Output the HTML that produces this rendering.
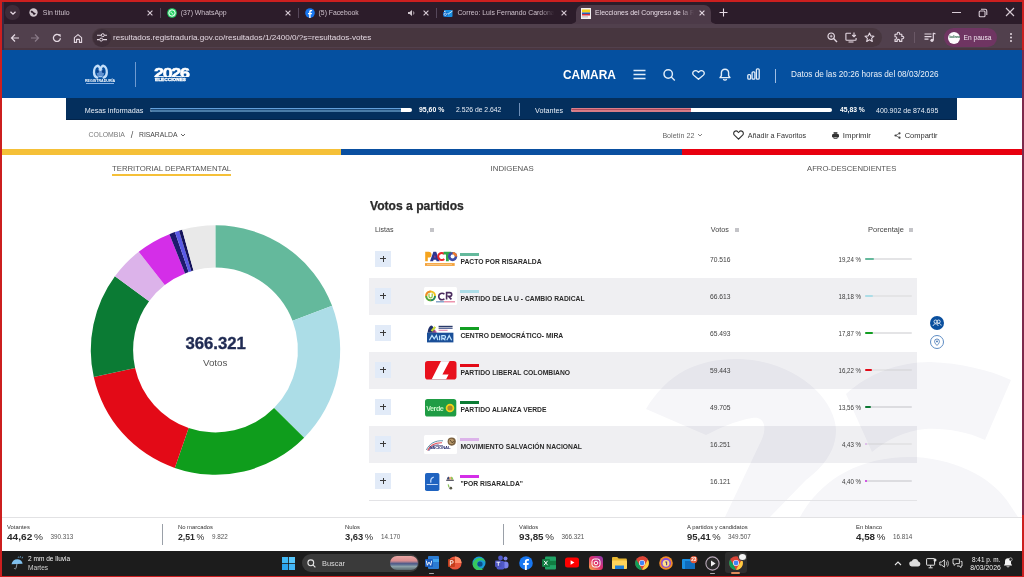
<!DOCTYPE html>
<html><head><meta charset="utf-8"><style>
*{margin:0;padding:0;box-sizing:border-box}
html,body{width:1024px;height:577px;overflow:hidden;background:#cc1f1f;font-family:"Liberation Sans",sans-serif}
.a{position:absolute;white-space:nowrap}
#root{position:absolute;left:0;top:0;width:1024px;height:577px;overflow:hidden}
.sort{width:4px;height:4px;background:#c4c4c8}
.plus{width:16px;height:16px;background:#e2ebf8}
.plus:before{content:"";position:absolute;left:5.2px;top:7.6px;width:5.6px;height:.9px;background:#3a3a3a}
.plus:after{content:"";position:absolute;left:7.55px;top:5.2px;width:.9px;height:5.6px;background:#3a3a3a}
</style></head>
<body><div id="root">
<!-- ===== CHROME TAB STRIP ===== -->
<div class="a" style="left:2px;top:2px;width:1020px;height:22px;background:#2c1c2a"></div>
<div class="a" style="left:4.8px;top:5px;width:15.5px;height:15px;border-radius:7px;background:#3d2c3a"></div>
<svg class="a" style="left:9px;top:9px" width="8" height="8" viewBox="0 0 8 8"><path d="M1.5 2.8L4 5.2L6.5 2.8" stroke="#e8dbe6" stroke-width="1.3" fill="none"/></svg>
<!-- tab1 -->
<svg class="a" style="left:29px;top:8px" width="9" height="9" viewBox="0 0 10 10"><circle cx="5" cy="5" r="4.6" fill="#cfc5cd"/><path d="M2 3.2c1.5-.6 2.4.3 3 1.2.7 1 1.8.6 2.6 1.4-.4 1.2-1.6 2-2.6 1.6-.9-.4-.4-1.6-1.6-2-.8-.3-1.6-.3-1.4-2.2z" fill="#2c1c2a"/></svg>
<div class="a " style="left:42.80px;top:9.82px;font-size:6.9px;line-height:6.9px;color:#cdc0cb;">Sin título</div>
<svg class="a" style="left:147.0px;top:10px" width="6" height="6" viewBox="0 0 6 6"><path d="M.6 .6L5.4 5.4M5.4 .6L.6 5.4" stroke="#d9ccd7" stroke-width="1.1"/></svg>
<div class="a" style="left:160px;top:8px;width:1px;height:10px;background:#56475a"></div>
<!-- tab2 -->
<svg class="a" style="left:167px;top:8px" width="10" height="10" viewBox="0 0 10 10"><circle cx="5" cy="5" r="4.8" fill="#25d366"/><circle cx="5" cy="5" r="3.2" fill="none" stroke="#fff" stroke-width="1"/><path d="M3.8 3.6c.3 1.2 1.2 2.2 2.5 2.6" stroke="#fff" stroke-width="1" fill="none"/></svg>
<div class="a " style="left:180.70px;top:9.82px;font-size:6.9px;line-height:6.9px;color:#cdc0cb;">(37) WhatsApp</div>
<svg class="a" style="left:285.0px;top:10px" width="6" height="6" viewBox="0 0 6 6"><path d="M.6 .6L5.4 5.4M5.4 .6L.6 5.4" stroke="#d9ccd7" stroke-width="1.1"/></svg>
<div class="a" style="left:298px;top:8px;width:1px;height:10px;background:#56475a"></div>
<!-- tab3 -->
<svg class="a" style="left:305px;top:8px" width="10" height="10" viewBox="0 0 10 10"><circle cx="5" cy="5" r="4.8" fill="#1877f2"/><path d="M5.6 10V6.3h1.2l.2-1.4H5.6V4c0-.4.2-.7.8-.7h.7V2.1c-.2 0-.6-.1-1.1-.1-1.1 0-1.8.6-1.8 1.8v1.1H3v1.4h1.2V10z" fill="#fff"/></svg>
<div class="a " style="left:318.60px;top:9.82px;font-size:6.8px;line-height:6.8px;color:#cdc0cb;">(5) Facebook</div>
<svg class="a" style="left:407px;top:9px" width="9" height="8" viewBox="0 0 9 8"><path d="M1 3h1.6L5 1v6L2.6 5H1z" fill="#cfc5cd"/><path d="M6.3 2.5c.7.8.7 2.2 0 3" stroke="#cfc5cd" stroke-width=".9" fill="none"/></svg>
<svg class="a" style="left:423.0px;top:10px" width="6" height="6" viewBox="0 0 6 6"><path d="M.6 .6L5.4 5.4M5.4 .6L.6 5.4" stroke="#d9ccd7" stroke-width="1.1"/></svg>
<div class="a" style="left:436px;top:8px;width:1px;height:10px;background:#56475a"></div>
<!-- tab4 -->
<svg class="a" style="left:443px;top:8px" width="10" height="10" viewBox="0 0 10 10"><rect x="1" y="2" width="8.5" height="7" rx="1" fill="#1a8fe3"/><path d="M1 3l4.2 3 4.3-3" stroke="#cfe8fb" stroke-width="1" fill="none"/><rect x="0" y="4" width="4.5" height="4.5" rx=".6" fill="#0a64c4"/><circle cx="2.25" cy="6.25" r="1.2" fill="none" stroke="#fff" stroke-width=".7"/></svg>
<div class="a" style="left:450px;top:4px;width:104px;height:16px;overflow:hidden"><div class="a " style="left:7.40px;top:5.82px;font-size:6.9px;line-height:6.9px;color:#cdc0cb;">Correo: Luis Fernando Cardona</div></div>
<div class="a" style="left:540px;top:4px;width:14px;height:18px;background:linear-gradient(90deg,rgba(44,28,42,0),#2c1c2a)"></div>
<svg class="a" style="left:561.0px;top:10px" width="6" height="6" viewBox="0 0 6 6"><path d="M.6 .6L5.4 5.4M5.4 .6L.6 5.4" stroke="#d9ccd7" stroke-width="1.1"/></svg>
<!-- active tab -->
<div class="a" style="left:576px;top:5px;width:135px;height:20px;background:#4c3a48;border-radius:7px 7px 0 0"></div>
<svg class="a" style="left:570px;top:17px" width="7" height="7"><path d="M0 7C4 7 7 5 7 0V7z" fill="#4c3a48"/></svg>
<svg class="a" style="left:710px;top:17px" width="7" height="7"><path d="M7 7C3 7 0 5 0 0V7z" fill="#4c3a48"/></svg>
<svg class="a" style="left:581px;top:8px" width="10" height="11" viewBox="0 0 10 11"><rect x="0" y="0" width="10" height="11" fill="#f4f1f3"/><rect x="1" y="1.5" width="8" height="3" fill="#f2d21a"/><rect x="1" y="4.5" width="8" height="1.5" fill="#2b5fb8"/><rect x="1" y="6" width="8" height="1.5" fill="#d9303a"/><rect x="1" y="8.5" width="6" height=".8" fill="#aaa"/></svg>
<div class="a" style="left:590px;top:4px;width:104px;height:16px;overflow:hidden"><div class="a " style="left:5.00px;top:5.82px;font-size:6.9px;line-height:6.9px;color:#e6dae4;">Elecciones del Congreso de la República</div></div>
<div class="a" style="left:680px;top:6px;width:14px;height:16px;background:linear-gradient(90deg,rgba(76,58,72,0),#4c3a48)"></div>
<svg class="a" style="left:699.0px;top:10px" width="6" height="6" viewBox="0 0 6 6"><path d="M.6 .6L5.4 5.4M5.4 .6L.6 5.4" stroke="#e6dae4" stroke-width="1.1"/></svg>
<svg class="a" style="left:719px;top:8px" width="9" height="9" viewBox="0 0 9 9"><path d="M4.5 .5v8M.5 4.5h8" stroke="#e6dae4" stroke-width="1.1"/></svg>
<!-- window controls -->
<div class="a" style="left:952px;top:12px;width:9px;height:1px;background:#d8ccd6"></div>
<svg class="a" style="left:978px;top:8px" width="10" height="10" viewBox="0 0 10 10"><rect x="1.2" y="3" width="5.8" height="5.8" rx="1" fill="none" stroke="#d8ccd6" stroke-width="1.1"/><path d="M3 1.3h4.2c.9 0 1.6.7 1.6 1.6V7" stroke="#d8ccd6" stroke-width="1.1" fill="none"/></svg>
<svg class="a" style="left:1005px;top:7px" width="10" height="10" viewBox="0 0 10 10"><path d="M1 1L9 9M9 1L1 9" stroke="#d8ccd6" stroke-width="1.1"/></svg>

<!-- ===== ADDRESS ROW ===== -->
<div class="a" style="left:2px;top:24px;width:1020px;height:26px;background:#51404d"></div>
<div class="a" style="left:2px;top:48px;width:1020px;height:2px;background:#4a3640"></div>
<svg class="a" style="left:9.5px;top:33px" width="10" height="10" viewBox="0 0 10 10"><path d="M9 5H1.6M5 1.5L1.5 5L5 8.5" stroke="#e4d8e2" stroke-width="1.2" fill="none"/></svg>
<svg class="a" style="left:30px;top:33px" width="10" height="10" viewBox="0 0 10 10"><path d="M1 5h7.4M5 1.5L8.5 5L5 8.5" stroke="#8a7a88" stroke-width="1.2" fill="none"/></svg>
<svg class="a" style="left:51.5px;top:33px" width="10" height="10" viewBox="0 0 10 10"><path d="M8.4 5.2A3.5 3.5 0 1 1 7.3 2.4" stroke="#e4d8e2" stroke-width="1.3" fill="none"/><path d="M5.6 1.2h3v3z" fill="#e4d8e2"/></svg>
<svg class="a" style="left:72.5px;top:32.5px" width="10" height="11" viewBox="0 0 10 11"><path d="M1.4 9.4V4.6L5 1.6l3.6 3V9.4H6.4V6.4H3.6v3z" stroke="#e4d8e2" stroke-width="1.1" fill="none" stroke-linejoin="round"/></svg>
<div class="a" style="left:92px;top:28px;width:790px;height:19px;border-radius:10px;background:#47363f"></div><div class="a" style="left:93px;top:28.5px;width:18px;height:18px;border-radius:9px;background:#3e2e39"></div>
<svg class="a" style="left:97px;top:33px" width="10" height="9" viewBox="0 0 10 9"><path d="M0 2.2h4M7.5 2.2H10M0 6.6h2.5M6 6.6h4" stroke="#e4d8e2" stroke-width="1.1"/><circle cx="5.8" cy="2.2" r="1.5" fill="none" stroke="#e4d8e2" stroke-width="1"/><circle cx="4.2" cy="6.6" r="1.5" fill="none" stroke="#e4d8e2" stroke-width="1"/></svg>
<div class="a " style="left:113.00px;top:34.23px;font-size:8.1px;line-height:8.1px;color:#e3d7e1;">resultados.registraduria.gov.co/resultados/1/2400/0/?s=resultados-votes</div>
<svg class="a" style="left:827px;top:32px" width="11" height="11" viewBox="0 0 11 11"><circle cx="4.2" cy="4.2" r="3.2" stroke="#e4d8e2" stroke-width="1.2" fill="none"/><path d="M6.6 6.6L10 10" stroke="#e4d8e2" stroke-width="1.4"/><path d="M2.8 4.2h2.8M4.2 2.8v2.8" stroke="#e4d8e2" stroke-width=".8"/></svg>
<svg class="a" style="left:845px;top:32px" width="12" height="11" viewBox="0 0 12 11"><path d="M6 1.2H1.6c-.4 0-.7.3-.7.7v5.6c0 .4.3.7.7.7h8.8c.4 0 .7-.3.7-.7V6" stroke="#e4d8e2" stroke-width="1.1" fill="none"/><path d="M3.5 10h5" stroke="#e4d8e2" stroke-width="1.1"/><path d="M9 .5v4.2M7.2 3l1.8 1.8L10.8 3" stroke="#e4d8e2" stroke-width="1.1" fill="none"/></svg>
<svg class="a" style="left:864px;top:32px" width="11" height="11" viewBox="0 0 11 11"><path d="M5.5 1l1.3 2.9 3.2.3-2.4 2.1.7 3.1-2.8-1.6-2.8 1.6.7-3.1L1 4.2l3.2-.3z" stroke="#e4d8e2" stroke-width="1.1" fill="none" stroke-linejoin="round"/></svg>
<svg class="a" style="left:893px;top:31px" width="12" height="12" viewBox="0 0 12 12"><path d="M2 3.2h2.2V2.4a1.2 1.2 0 0 1 2.4 0v.8h2.2v2.2h.8a1.2 1.2 0 0 1 0 2.4h-.8v2.6H6.6V9.6a1.2 1.2 0 0 0-2.4 0v.8H2V8.2h.6a1.2 1.2 0 0 0 0-2.4H2z" stroke="#e4d8e2" stroke-width="1.1" fill="none" stroke-linejoin="round"/></svg>
<div class="a" style="left:914px;top:32px;width:1px;height:11px;background:#6a5866"></div>
<svg class="a" style="left:924px;top:32px" width="12" height="11" viewBox="0 0 12 11"><path d="M0.5 2h7M0.5 4.6h7M0.5 7.2h4" stroke="#e4d8e2" stroke-width="1.2"/><path d="M9.3 1v7" stroke="#e4d8e2" stroke-width="1.2"/><circle cx="8" cy="8.3" r="1.6" fill="#e4d8e2"/><path d="M9.3 1l2.2 1" stroke="#e4d8e2" stroke-width="1.2"/></svg>
<div class="a" style="left:944px;top:28px;width:53px;height:19px;border-radius:10px;background:#6f3562"></div>
<div class="a" style="left:948px;top:31.5px;width:12px;height:12px;border-radius:50%;background:#fdfdfd"></div>
<div class="a" style="left:949.5px;top:36px;font-size:3px;line-height:3px;color:#1a5a3a;font-weight:bold">ladinna</div>
<div class="a " style="left:963.60px;top:34.74px;font-size:6.6px;line-height:6.6px;color:#f0e4ee;">En pausa</div>
<div class="a" style="left:1009.5px;top:33px;width:2px;height:2px;border-radius:1px;background:#e4d8e2;box-shadow:0 3.5px 0 #e4d8e2,0 7px 0 #e4d8e2"></div>

<!-- ===== SITE HEADER ===== -->
<div class="a" style="left:2px;top:50px;width:1020px;height:48px;background:#0550a0"></div>
<!-- registraduria crest -->
<svg class="a" style="left:84px;top:62px" width="33" height="18" viewBox="84 62 33 18">
<ellipse cx="100.4" cy="73" rx="3.6" ry="4.2" fill="#5f8fce"/>
<path d="M100.4 69.6C99.6 67 98.4 65.6 97.2 65.8C95.2 66.4 93.9 69.6 94 72.6C94.1 75.4 95.4 77 97.2 77.6" stroke="#c4def9" stroke-width="2.3" fill="none" stroke-linecap="round"/>
<path d="M100.4 69.6C101.2 67 102.4 65.6 103.6 65.8C105.6 66.4 106.9 69.6 106.8 72.6C106.7 75.4 105.4 77 103.6 77.6" stroke="#c4def9" stroke-width="2.3" fill="none" stroke-linecap="round"/>
<ellipse cx="97.6" cy="71.4" rx="1.3" ry="1.6" fill="#0a3f88"/>
<ellipse cx="103.2" cy="71.4" rx="1.3" ry="1.6" fill="#0a3f88"/>
<path d="M98.6 76.6h3.6" stroke="#9cc4f0" stroke-width="1.2"/>
</svg>
<div class="a " style="left:84.70px;top:79.54px;font-size:3.7px;line-height:3.7px;color:#fff;font-weight:bold;transform:scaleX(0.98);transform-origin:left">REGISTRADURÍA</div>
<div class="a" style="left:86px;top:83.3px;width:28px;height:.8px;background:#8fb4e4"></div>
<div class="a" style="left:135px;top:62px;width:1px;height:25px;background:#6f9ad0"></div>
<!-- 2026 ELECCIONES -->
<div class="a " style="left:153.80px;top:66.83px;font-size:13.8px;line-height:13.8px;color:#fff;font-weight:bold;letter-spacing:-1px;transform:scaleX(1.3);transform-origin:left;-webkit-text-stroke:0.5px #fff">2026</div>
<div class="a" style="left:150px;top:77.3px;width:44px;height:1px;background:#0550a0"></div>
<div class="a " style="left:155.40px;top:78.31px;font-size:4.2px;line-height:4.2px;color:#fff;font-weight:bold;letter-spacing:0.05px;transform:scaleX(1.12);transform-origin:left;-webkit-text-stroke:0.3px #fff">ELECCIONES</div>
<!-- CAMARA + icons -->
<div class="a " style="left:563.00px;top:70.07px;font-size:11.9px;line-height:11.9px;color:#fff;font-weight:bold;">CAMARA</div>
<svg class="a" style="left:633px;top:69px" width="13" height="11" viewBox="0 0 13 11"><path d="M0.5 1.5h12M0.5 5.5h12M0.5 9.5h12" stroke="#e2edf9" stroke-width="1.45"/></svg>
<svg class="a" style="left:663px;top:69px" width="13" height="12" viewBox="0 0 13 12"><circle cx="5.2" cy="5" r="4.2" stroke="#e2edf9" stroke-width="1.45" fill="none"/><path d="M8.3 8.1L11.8 11.4" stroke="#e2edf9" stroke-width="1.4"/></svg>
<svg class="a" style="left:691.5px;top:70px" width="13" height="10" viewBox="0 0 13 11" preserveAspectRatio="none"><path d="M6.5 10.2L1.6 5.6C.4 4.4.5 2.4 1.8 1.4 3 .5 4.9.7 6 1.9l.5.6.5-.6C8.1.7 10 .5 11.2 1.4c1.3 1 1.4 3 .2 4.2z" stroke="#e2edf9" stroke-width="1.4" fill="none" stroke-linejoin="round"/></svg>
<svg class="a" style="left:719px;top:68px" width="12" height="13" viewBox="0 0 12 13"><path d="M6 1.2c-2.2 0-3.6 1.6-3.6 3.6v3L1 9.6h10L9.6 7.8v-3C9.6 2.8 8.2 1.2 6 1.2z" stroke="#e2edf9" stroke-width="1.4" fill="none" stroke-linejoin="round"/><path d="M4.4 11a1.7 1.7 0 0 0 3.2 0" stroke="#e2edf9" stroke-width="1.3" fill="none"/></svg>
<svg class="a" style="left:747px;top:68px" width="13" height="12" viewBox="0 0 13 12"><rect x=".8" y="6.6" width="2.8" height="4.6" rx="1" stroke="#e2edf9" stroke-width="1.3" fill="none"/><rect x="5.1" y="3.8" width="2.8" height="7.4" rx="1" stroke="#e2edf9" stroke-width="1.3" fill="none"/><rect x="9.4" y=".8" width="2.8" height="10.4" rx="1" stroke="#e2edf9" stroke-width="1.3" fill="none"/></svg>
<div class="a" style="left:774.5px;top:68.5px;width:1px;height:14px;background:#9fbde3"></div>
<div class="a " style="left:791.00px;top:71.03px;font-size:8.2px;line-height:8.2px;color:#eaf0f8;">Datos de las 20:26 horas del 08/03/2026</div>

<!-- ===== NAVY PROGRESS BAR ===== -->
<div class="a" style="left:2px;top:98px;width:1020px;height:453px;background:#fff"></div>
<div class="a" style="left:66px;top:98px;width:891px;height:22px;background:#042f5d;border-bottom:1px solid #03244a"></div>
<div class="a " style="left:84.70px;top:106.90px;font-size:7.2px;line-height:7.2px;color:#e8eef6;">Mesas informadas</div>
<div class="a" style="left:150px;top:107.8px;width:262px;height:4px;border-radius:2px;background:#fff"></div>
<div class="a" style="left:150px;top:107.8px;width:251px;height:4px;border-radius:2px 0 0 2px;background:linear-gradient(180deg,#62a0dc 0,#62a0dc 1.1px,#1d4a78 1.1px,#1d4a78 1.9px,#4a7ca8 1.9px)"></div>
<div class="a " style="left:419.00px;top:106.92px;font-size:6.9px;line-height:6.9px;color:#fff;font-weight:bold;">95,60 %</div>
<div class="a " style="left:456.00px;top:106.92px;font-size:6.8px;line-height:6.8px;color:#e8eef6;">2.526 de 2.642</div>
<div class="a" style="left:519px;top:103px;width:1px;height:13px;background:#6f8fb8"></div>
<div class="a " style="left:535.00px;top:106.90px;font-size:7.2px;line-height:7.2px;color:#e8eef6;">Votantes</div>
<div class="a" style="left:571px;top:107.8px;width:261px;height:4px;border-radius:2px;background:#fff"></div>
<div class="a" style="left:571px;top:107.8px;width:120px;height:4px;border-radius:2px 0 0 2px;background:linear-gradient(180deg,#dc7e88 0,#dc7e88 1.1px,#b04a5c 1.1px,#b04a5c 1.9px,#d97c86 1.9px)"></div>
<div class="a " style="left:840.00px;top:106.93px;font-size:6.75px;line-height:6.75px;color:#fff;font-weight:bold;">45,83 %</div>
<div class="a " style="left:876.00px;top:106.91px;font-size:7.0px;line-height:7.0px;color:#e8eef6;">400.902 de 874.695</div>

<!-- ===== BREADCRUMB ===== -->
<div class="a " style="left:88.60px;top:132.32px;font-size:6.9px;line-height:6.9px;color:#7a7a7a;">COLOMBIA</div>
<div class="a " style="left:130.80px;top:130.97px;font-size:9px;line-height:9px;color:#555;">/</div>
<div class="a " style="left:139.00px;top:132.32px;font-size:6.8px;line-height:6.8px;color:#444;">RISARALDA</div>
<svg class="a" style="left:180px;top:133px" width="6" height="4" viewBox="0 0 6 4"><path d="M1 1l2 2 2-2" stroke="#555" stroke-width=".9" fill="none"/></svg>
<div class="a " style="left:662.40px;top:132.50px;font-size:7.1px;line-height:7.1px;color:#666;">Boletín 22</div>
<svg class="a" style="left:697px;top:133px" width="6" height="4" viewBox="0 0 6 4"><path d="M1 1l2 2 2-2" stroke="#777" stroke-width=".9" fill="none"/></svg>
<svg class="a" style="left:733px;top:130px" width="11" height="10" viewBox="0 0 11 10"><path d="M5.5 9.2L1.4 5.2C.4 4.2.4 2.5 1.5 1.5 2.5.7 4 .8 4.9 1.8l.6.6.6-.6C7 .8 8.5.7 9.5 1.5c1.1 1 1.1 2.7.1 3.7z" stroke="#333" stroke-width="1.1" fill="none"/></svg>
<div class="a " style="left:747.80px;top:131.90px;font-size:7.2px;line-height:7.2px;color:#333;">Añadir a Favoritos</div>
<svg class="a" style="left:832.3px;top:132.3px" width="7" height="7" viewBox="0 0 7 7"><rect x="1.6" y="0" width="3.8" height="2" rx=".4" fill="#555"/><rect x="0" y="2" width="7" height="3.4" rx="1.2" fill="#333"/><rect x="1.6" y="4.6" width="3.8" height="2.2" rx=".3" fill="#333"/><rect x="2.2" y="5" width="2.6" height=".6" fill="#fff"/></svg>
<div class="a " style="left:842.80px;top:132.45px;font-size:7.8px;line-height:7.8px;color:#333;">Imprimir</div>
<svg class="a" style="left:894.3px;top:132px" width="7" height="7" viewBox="0 0 7 7"><circle cx="1.5" cy="3.5" r="1.1" fill="#444"/><circle cx="5.5" cy="1.3" r="1.1" fill="#444"/><circle cx="5.5" cy="5.7" r="1.1" fill="#444"/><path d="M1.5 3.5L5.5 1.3M1.5 3.5L5.5 5.7" stroke="#444" stroke-width=".7"/></svg>
<div class="a " style="left:904.70px;top:132.47px;font-size:7.5px;line-height:7.5px;color:#333;">Compartir</div>

<!-- stripe -->
<div class="a" style="left:2px;top:149px;width:339px;height:6px;background:#f5c038"></div>
<div class="a" style="left:341px;top:149px;width:341px;height:6px;background:#0a4fa0"></div>
<div class="a" style="left:682px;top:149px;width:340px;height:6px;background:#e8000f"></div>

<!-- tabs -->
<div class="a " style="left:112.00px;top:164.66px;font-size:7.75px;line-height:7.75px;color:#555;">TERRITORIAL DEPARTAMENTAL</div>
<div class="a" style="left:112px;top:174px;width:119px;height:1.5px;background:#f5c038"></div>
<div class="a " style="left:490.60px;top:164.65px;font-size:7.85px;line-height:7.85px;color:#555;">INDIGENAS</div>
<div class="a " style="left:807.00px;top:164.66px;font-size:7.7px;line-height:7.7px;color:#555;">AFRO-DESCENDIENTES</div>

<!-- watermark moved -->
<!-- ===== DONUT ===== -->
<svg class="a" style="left:0;top:0" width="1024" height="577">
<path fill="#64b99c" d="M215.50 225.30A124.7 124.7 0 0 1 332.12 305.84L292.56 320.82A82.4 82.4 0 0 0 215.50 267.60Z"/>
<path fill="#acdde7" d="M332.12 305.84A124.7 124.7 0 0 1 304.12 437.73L274.06 407.97A82.4 82.4 0 0 0 292.56 320.82Z"/>
<path fill="#0f9d1c" d="M304.12 437.73A124.7 124.7 0 0 1 174.82 467.88L188.62 427.89A82.4 82.4 0 0 0 274.06 407.97Z"/>
<path fill="#e30a17" d="M174.82 467.88A124.7 124.7 0 0 1 93.78 377.12L135.07 367.92A82.4 82.4 0 0 0 188.62 427.89Z"/>
<path fill="#0b7b34" d="M93.78 377.12A124.7 124.7 0 0 1 114.94 276.26L149.05 301.28A82.4 82.4 0 0 0 135.07 367.92Z"/>
<path fill="#dcb3ea" d="M114.94 276.26A124.7 124.7 0 0 1 138.73 251.74L164.77 285.07A82.4 82.4 0 0 0 149.05 301.28Z"/>
<path fill="#d42ee8" d="M138.73 251.74A124.7 124.7 0 0 1 169.39 234.14L185.03 273.44A82.4 82.4 0 0 0 164.77 285.07Z"/>
<path fill="#1d1a6e" d="M169.39 234.14A124.7 124.7 0 0 1 174.90 232.09L188.67 272.09A82.4 82.4 0 0 0 185.03 273.44Z"/>
<path fill="#5a5ae6" d="M174.90 232.09A124.7 124.7 0 0 1 179.04 230.75L191.41 271.20A82.4 82.4 0 0 0 188.67 272.09Z"/>
<path fill="#14125a" d="M179.04 230.75A124.7 124.7 0 0 1 182.18 229.84L193.48 270.60A82.4 82.4 0 0 0 191.41 271.20Z"/>
<path fill="#e9e9e9" d="M182.18 229.84A124.7 124.7 0 0 1 215.06 225.30L215.21 267.60A82.4 82.4 0 0 0 193.48 270.60Z"/>

</svg>
<div class="a " style="left:185.40px;top:335.53px;font-size:16.76px;line-height:16.76px;color:#1f2a52;font-weight:bold;-webkit-text-stroke:0.35px #1f2a52">366.321</div>
<div class="a " style="left:202.90px;top:357.51px;font-size:9.8px;line-height:9.8px;color:#555;">Votos</div>

<!-- ===== TABLE ===== -->
<div class="a " style="left:370.00px;top:200.15px;font-size:12.1px;line-height:12.1px;color:#2a2a2a;font-weight:bold;-webkit-text-stroke:0.25px #2a2a2a">Votos a partidos</div>
<div class="a " style="left:375.00px;top:226.70px;font-size:7.1px;line-height:7.1px;color:#444;">Listas</div>
<div class="a sort" style="left:430px;top:227.6px"></div>
<div class="a " style="left:710.80px;top:225.90px;font-size:7.2px;line-height:7.2px;color:#444;">Votos</div>
<div class="a sort" style="left:735px;top:227.6px"></div>
<div class="a " style="left:868.00px;top:225.88px;font-size:7.5px;line-height:7.5px;color:#444;">Porcentaje</div>
<div class="a sort" style="left:909px;top:227.6px"></div>
<div class="a plus" style="left:375px;top:250.8px"></div>
<svg class="a" style="left:424px;top:250.40px" width="34" height="17" viewBox="0 0 34 17">
<rect x="1" y="13.1" width="29.7" height="2.8" fill="#f4a23a"/>
<rect x="3" y="14" width="25" height=".9" fill="#f8c98a"/>
<path d="M1.2 11.3V1.8h3.4a2.9 2.9 0 0 1 0 5.8H3.8v3.7z" fill="#f5a41e"/>
<path d="M6 11.3L9.4 1.8h2.8l3.4 9.5h-3l-.5-1.5H9.6l-.5 1.5z" fill="#2c3590"/>
<path d="M10.2 7.4h1.4l-.7-2.4z" fill="#d03a8a"/>
<path d="M21 3.2a4.6 4.6 0 1 0 0 6.6l-1.6-1.6a2.4 2.4 0 1 1 0-3.4z" fill="#e8262c"/>
<path d="M19.6 1.8h7.6v2.6h-2.4v6.9h-2.8V4.4h-2.4z" fill="#2fa84a"/>
<circle cx="28.6" cy="6.6" r="4.6" fill="#3d4aa6"/>
<path d="M28.6 2a4.6 4.6 0 0 1 4.6 4.6h-2.4a2.2 2.2 0 0 0-2.2-2.2z" fill="#f07a2a"/>
<circle cx="28.6" cy="6.6" r="2" fill="#fff"/>
</svg>
<div class="a" style="left:460.4px;top:253.20000000000002px;width:18.6px;height:3.2px;background:#64b99c;"></div>
<div class="a " style="left:460.40px;top:258.83px;font-size:6.75px;line-height:6.75px;color:#2a2a2a;font-weight:bold;">PACTO POR RISARALDA</div>
<div class="a " style="left:710.00px;top:256.93px;font-size:6.73px;line-height:6.73px;color:#404040;">70.516</div>
<div class="a" style="left:790px;width:71px;text-align:right;top:256.55px;font-size:6.5px;line-height:6.5px;color:#3a3a3a;transform:scaleX(0.94);transform-origin:right">19,24 %</div>
<div class="a" style="left:864.7px;top:258.0px;width:47px;height:2.4px;background:#e4e4e6;border-radius:1.2px"></div>
<div class="a" style="left:864.7px;top:258.0px;width:9.0px;height:2.4px;background:#64b99c;border-radius:1.2px"></div>
<div class="a" style="left:369px;top:277.8px;width:548px;height:37.0px;background:#efeff2;"></div>
<div class="a plus" style="left:375px;top:287.8px"></div>
<div class="a" style="left:424px;top:287.00px;width:33px;height:17.8px;border-radius:1.5px;background:#fff"></div>
<svg class="a" style="left:424px;top:287.00px" width="33" height="18" viewBox="0 0 33 18">
<circle cx="6.6" cy="8.9" r="4.4" fill="none" stroke="#f2c21e" stroke-width="1.9"/>
<path d="M2.2 8.9A4.4 4.4 0 0 1 6.6 4.5" stroke="#ee8a2a" stroke-width="1.9" fill="none"/>
<path d="M6.6 13.3A4.4 4.4 0 0 0 11 8.9" stroke="#1f8a6a" stroke-width="1.9" fill="none"/>
<path d="M2.2 8.9A4.4 4.4 0 0 0 6.6 13.3" stroke="#4aa84a" stroke-width="1.9" fill="none"/>
<path d="M5 6.4v2.8a1.6 1.6 0 0 0 3.2 0V6.4" stroke="#8ac23a" stroke-width="1.2" fill="none"/>
<path d="M20.4 7.2a3.3 3.3 0 1 0 0 4.6" stroke="#4a2a5e" stroke-width="1.6" fill="none"/>
<path d="M22.6 12.4V5.6h3.2a1.9 1.9 0 0 1 0 3.8h-1.2l2.8 3" stroke="#4a2a5e" stroke-width="1.6" fill="none"/>
<rect x="12" y="14.4" width="8" height=".9" fill="#3a6aa8"/>
<rect x="20" y="14.4" width="11" height=".9" fill="#e0507a"/>
</svg>
<div class="a" style="left:460.4px;top:290.2px;width:18.6px;height:3.2px;background:#acdde7;"></div>
<div class="a " style="left:460.40px;top:295.83px;font-size:6.75px;line-height:6.75px;color:#2a2a2a;font-weight:bold;">PARTIDO DE LA U - CAMBIO RADICAL</div>
<div class="a " style="left:710.00px;top:293.93px;font-size:6.73px;line-height:6.73px;color:#404040;">66.613</div>
<div class="a" style="left:790px;width:71px;text-align:right;top:293.55px;font-size:6.5px;line-height:6.5px;color:#3a3a3a;transform:scaleX(0.94);transform-origin:right">18,18 %</div>
<div class="a" style="left:864.7px;top:295.0px;width:47px;height:2.4px;background:#e4e4e6;border-radius:1.2px"></div>
<div class="a" style="left:864.7px;top:295.0px;width:8.5px;height:2.4px;background:#acdde7;border-radius:1.2px"></div>
<div class="a plus" style="left:375px;top:324.8px"></div>
<svg class="a" style="left:427.4px;top:324.70px" width="27" height="18" viewBox="0 0 27 18">
<rect x="0" y="0" width="26.4" height="7.7" fill="#fff"/>
<path d="M.6 7.7C1 4 2.2 1.6 4 .6c1.6.2 2.4 1.4 2.6 2.8l2.6 4.3z" fill="#1f2f6a"/>
<path d="M3.6 5.6L7.4 1.2 9 2.6 5.6 6.8z" fill="#c8d83a"/>
<path d="M5 7.7l3-3.2 2.4 3.2z" fill="#d84a8a" opacity=".7"/>
<rect x="11.6" y=".8" width="14" height="1.6" fill="#2a3a6a"/>
<rect x="11.6" y="3" width="14" height="1" fill="#5a6a9a"/>
<rect x="11.6" y="4.8" width="9" height=".9" fill="#d86a9a"/>
<rect x="0" y="7.7" width="26.4" height="9.7" fill="#1a4f98"/>
<path d="M2.4 15.2L5 10.4l2.2 3.4 2.2-3.4 1.4 4.8M12.6 10.6v4.6M14.8 15.2v-4.6h2.4a1.4 1.4 0 0 1 0 2.8h-1.2l2.4 1.8M19.8 15.2l2.4-4.6 2.4 4.6" stroke="#bfe4ff" stroke-width="1.2" fill="none"/>
</svg>
<div class="a" style="left:460.4px;top:327.2px;width:18.6px;height:3.2px;background:#129e22;"></div>
<div class="a " style="left:460.40px;top:332.83px;font-size:6.75px;line-height:6.75px;color:#2a2a2a;font-weight:bold;">CENTRO DEMOCRÁTICO- MIRA</div>
<div class="a " style="left:710.00px;top:330.93px;font-size:6.73px;line-height:6.73px;color:#404040;">65.493</div>
<div class="a" style="left:790px;width:71px;text-align:right;top:330.55px;font-size:6.5px;line-height:6.5px;color:#3a3a3a;transform:scaleX(0.94);transform-origin:right">17,87 %</div>
<div class="a" style="left:864.7px;top:332.0px;width:47px;height:2.4px;background:#e4e4e6;border-radius:1.2px"></div>
<div class="a" style="left:864.7px;top:332.0px;width:8.4px;height:2.4px;background:#129e22;border-radius:1.2px"></div>
<div class="a" style="left:369px;top:351.8px;width:548px;height:37.0px;background:#efeff2;"></div>
<div class="a plus" style="left:375px;top:361.8px"></div>
<svg class="a" style="left:425px;top:361.00px" width="32" height="19" viewBox="0 0 32 19">
<rect x="0" y="0" width="31.5" height="18.5" rx="2.8" fill="#e8101c"/>
<path d="M16 0h8.6L17.4 13.6h6.2L21 18.5H6.6z" fill="#fff"/>
<path d="M16 0h8.6M6.6 18.5H21" stroke="#b8a0a8" stroke-width=".6"/>
</svg>
<div class="a" style="left:460.4px;top:364.2px;width:18.6px;height:3.2px;background:#e30a17;"></div>
<div class="a " style="left:460.40px;top:369.83px;font-size:6.75px;line-height:6.75px;color:#2a2a2a;font-weight:bold;">PARTIDO LIBERAL COLOMBIANO</div>
<div class="a " style="left:710.00px;top:367.93px;font-size:6.73px;line-height:6.73px;color:#404040;">59.443</div>
<div class="a" style="left:790px;width:71px;text-align:right;top:367.55px;font-size:6.5px;line-height:6.5px;color:#3a3a3a;transform:scaleX(0.94);transform-origin:right">16,22 %</div>
<div class="a" style="left:864.7px;top:369.0px;width:47px;height:2.4px;background:#e4e4e6;border-radius:1.2px"></div>
<div class="a" style="left:864.7px;top:369.0px;width:7.6px;height:2.4px;background:#e30a17;border-radius:1.2px"></div>
<div class="a plus" style="left:375px;top:398.8px"></div>
<svg class="a" style="left:425px;top:398.90px" width="32" height="18" viewBox="0 0 32 18">
<rect x="0" y="0" width="31.3" height="17.6" rx="2.6" fill="#1f9c44"/>
<text x="1.2" y="12.2" font-family="Liberation Sans" font-weight="bold" font-size="7.2" fill="#c8f5c8" letter-spacing="-0.5">Verde</text>
<circle cx="25" cy="9" r="4.3" fill="#f2d21a"/>
<circle cx="25" cy="9" r="2.6" fill="#a8882a"/>
</svg>
<div class="a" style="left:460.4px;top:401.2px;width:18.6px;height:3.2px;background:#0b7b34;"></div>
<div class="a " style="left:460.40px;top:406.83px;font-size:6.75px;line-height:6.75px;color:#2a2a2a;font-weight:bold;">PARTIDO ALIANZA VERDE</div>
<div class="a " style="left:710.00px;top:404.93px;font-size:6.73px;line-height:6.73px;color:#404040;">49.705</div>
<div class="a" style="left:790px;width:71px;text-align:right;top:404.55px;font-size:6.5px;line-height:6.5px;color:#3a3a3a;transform:scaleX(0.94);transform-origin:right">13,56 %</div>
<div class="a" style="left:864.7px;top:406.0px;width:47px;height:2.4px;background:#e4e4e6;border-radius:1.2px"></div>
<div class="a" style="left:864.7px;top:406.0px;width:6.4px;height:2.4px;background:#0b7b34;border-radius:1.2px"></div>
<div class="a" style="left:369px;top:425.8px;width:548px;height:37.0px;background:#efeff2;"></div>
<div class="a plus" style="left:375px;top:435.8px"></div>
<div class="a" style="left:424.3px;top:434.80px;width:32.7px;height:18.9px;border-radius:1.5px;background:#fff"></div>
<svg class="a" style="left:424.3px;top:434.80px" width="33" height="19" viewBox="0 0 33 19">
<path d="M2.4 15C5 9 11 5.2 19 5.8" stroke="#2a6a8a" stroke-width=".9" fill="none" opacity=".8"/>
<path d="M3.6 15.6C6 10.6 11.4 7.6 18 7.8" stroke="#e0505a" stroke-width="1.1" fill="none"/>
<path d="M4.6 16C7 12 10.6 10 14.6 9.8" stroke="#4a5aa0" stroke-width=".9" fill="none"/>
<rect x="9" y="10" width="10" height="1" fill="#8a8aa8"/>
<text x="5.4" y="14.4" font-family="Liberation Sans" font-weight="bold" font-size="4.2" fill="#2a3070" letter-spacing="-0.15">NACIONAL</text>
<circle cx="27.7" cy="6.6" r="4.1" fill="#7a6040"/>
<circle cx="27.4" cy="6.4" r="2.6" fill="#b8986a"/>
<path d="M26 5l2.4 3 1.2-2" stroke="#4a3a22" stroke-width=".8" fill="none"/>
</svg>
<div class="a" style="left:460.4px;top:438.2px;width:18.6px;height:3.2px;background:#dcb3ea;"></div>
<div class="a " style="left:460.40px;top:443.83px;font-size:6.75px;line-height:6.75px;color:#2a2a2a;font-weight:bold;">MOVIMIENTO SALVACIÓN NACIONAL</div>
<div class="a " style="left:710.00px;top:441.93px;font-size:6.73px;line-height:6.73px;color:#404040;">16.251</div>
<div class="a" style="left:790px;width:71px;text-align:right;top:441.55px;font-size:6.5px;line-height:6.5px;color:#3a3a3a;transform:scaleX(0.94);transform-origin:right">4,43 %</div>
<div class="a" style="left:864.7px;top:443.0px;width:47px;height:2.4px;background:#e4e4e6;border-radius:1.2px"></div>
<div class="a" style="left:864.7px;top:443.0px;width:2.1px;height:2.4px;background:#dcb3ea;border-radius:1.2px"></div>
<div class="a plus" style="left:375px;top:472.8px"></div>
<svg class="a" style="left:425px;top:472.70px" width="30" height="19" viewBox="0 0 30 19">
<rect x="0" y="0" width="14.4" height="18" rx="1.8" fill="#1f63c0"/>
<path d="M8.8 4.2C6.8 4.6 5.4 6.4 5.8 9.6" stroke="#bcd8ff" stroke-width="1.3" fill="none"/>
<rect x="1.6" y="11" width="11.2" height=".9" fill="#d6e6fb"/>
<path d="M21.8 6.4a3.4 3.4 0 0 1 6.6 0z" fill="#f4b07a"/>
<path d="M21.8 6.4a3.4 3.4 0 0 1 2-2.8l.8 2.8z" fill="#3a4a7a"/>
<path d="M26 3.4a3.4 3.4 0 0 1 2.4 3h-2.2z" fill="#8ac85a"/>
<rect x="21.2" y="6.8" width="7.6" height="1" fill="#3a3a4a"/>
<path d="M23.2 11.4l.8 3" stroke="#8ac25a" stroke-width="1.2"/>
<circle cx="25.8" cy="15.2" r="1.4" fill="#5a5a4a"/>
</svg>
<div class="a" style="left:460.4px;top:475.2px;width:18.6px;height:3.2px;background:#d42ee8;"></div>
<div class="a " style="left:460.40px;top:480.83px;font-size:6.75px;line-height:6.75px;color:#2a2a2a;font-weight:bold;">"POR RISARALDA"</div>
<div class="a " style="left:710.00px;top:478.93px;font-size:6.73px;line-height:6.73px;color:#404040;">16.121</div>
<div class="a" style="left:790px;width:71px;text-align:right;top:478.55px;font-size:6.5px;line-height:6.5px;color:#3a3a3a;transform:scaleX(0.94);transform-origin:right">4,40 %</div>
<div class="a" style="left:864.7px;top:480.0px;width:47px;height:2.4px;background:#e4e4e6;border-radius:1.2px"></div>
<div class="a" style="left:864.7px;top:480.0px;width:2.1px;height:2.4px;background:#d42ee8;border-radius:1.2px"></div>
<svg class="a" style="left:0;top:0;mix-blend-mode:multiply" width="1024" height="577">
<path d="M646 409C668 372 700 358 740 359C795 361 835 398 836 430C836 452 822 468 806 480L770 517H725L762 439C768 424 762 416 752 418C735 421 720 428 706 435z" fill="#f6f6f9"/>
<path d="M846 394C868 374 898 362 930 362C960 363 990 370 1011 380L985 440C965 431 945 428 925 429C905 431 886 440 872 452z" fill="#f6f6f9"/>
<path d="M800 517C820 480 860 455 916 457C960 460 995 480 1010 505L1018 517z" fill="#f6f6f9"/>
</svg>
<div class="a" style="left:369px;top:500px;width:548px;height:1px;background:#e3e3e6"></div>

<!-- floating icons -->
<div class="a" style="left:930px;top:316px;width:14px;height:14px;border-radius:50%;background:#0a4f9e"></div>
<svg class="a" style="left:932px;top:318px" width="10" height="10" viewBox="0 0 10 10"><circle cx="3.6" cy="3.6" r="1.6" stroke="#fff" stroke-width=".8" fill="none"/><circle cx="6.6" cy="3.6" r="1.6" stroke="#fff" stroke-width=".8" fill="none"/><path d="M1 8c.4-1.5 1.4-2.2 2.6-2.2s2.2.7 2.6 2.2M4.8 5.9c.5-.3 1.1-.5 1.8-.5 1.2 0 2.2.7 2.6 2.2" stroke="#fff" stroke-width=".8" fill="none"/></svg>
<div class="a" style="left:930px;top:334.5px;width:14px;height:14px;border-radius:50%;border:1px solid #5d8cc4;background:#fff"></div>
<svg class="a" style="left:933px;top:337.5px" width="8" height="8" viewBox="0 0 8 8"><path d="M4 7.4C2.4 5.8 1.6 4.6 1.6 3.4a2.4 2.4 0 0 1 4.8 0c0 1.2-.8 2.4-2.4 4z" stroke="#3a6fb0" stroke-width=".8" fill="none"/><circle cx="4" cy="3.4" r=".9" fill="#3a6fb0"/></svg>

<!-- ===== STATS BAR ===== -->
<div class="a" style="left:2px;top:517px;width:1020px;height:1px;background:#e2e2e4"></div>
<div class="a " style="left:6.80px;top:525.24px;font-size:5.2px;line-height:5.2px;color:#333;transform:scaleX(1.13);transform-origin:left">Votantes</div>
<div class="a " style="left:6.80px;top:532.51px;font-size:8.4px;line-height:8.4px;color:#2a2a2a;transform:scaleX(1.204);transform-origin:left"><b>44,62</b><span style="margin-left:1.4px">%</span></div>
<div class="a " style="left:50.60px;top:533.56px;font-size:6.3px;line-height:6.3px;color:#555;">390.313</div>
<div class="a " style="left:177.50px;top:525.24px;font-size:5.2px;line-height:5.2px;color:#333;transform:scaleX(1.13);transform-origin:left">No marcados</div>
<div class="a " style="left:177.50px;top:532.51px;font-size:8.4px;line-height:8.4px;color:#2a2a2a;transform:scaleX(1.041);transform-origin:left"><b>2,51</b><span style="margin-left:1.4px">%</span></div>
<div class="a " style="left:212.00px;top:533.56px;font-size:6.3px;line-height:6.3px;color:#555;">9.822</div>
<div class="a " style="left:344.75px;top:525.24px;font-size:5.2px;line-height:5.2px;color:#333;transform:scaleX(1.13);transform-origin:left">Nulos</div>
<div class="a " style="left:344.75px;top:532.51px;font-size:8.4px;line-height:8.4px;color:#2a2a2a;transform:scaleX(1.120);transform-origin:left"><b>3,63</b><span style="margin-left:1.4px">%</span></div>
<div class="a " style="left:381.00px;top:533.56px;font-size:6.3px;line-height:6.3px;color:#555;">14.170</div>
<div class="a " style="left:519.00px;top:525.24px;font-size:5.2px;line-height:5.2px;color:#333;transform:scaleX(1.13);transform-origin:left">Válidos</div>
<div class="a " style="left:519.00px;top:532.51px;font-size:8.4px;line-height:8.4px;color:#2a2a2a;transform:scaleX(1.171);transform-origin:left"><b>93,85</b><span style="margin-left:1.4px">%</span></div>
<div class="a " style="left:561.50px;top:533.56px;font-size:6.3px;line-height:6.3px;color:#555;">366.321</div>
<div class="a " style="left:687.00px;top:525.24px;font-size:5.2px;line-height:5.2px;color:#333;transform:scaleX(1.13);transform-origin:left">A partidos y candidatos</div>
<div class="a " style="left:687.00px;top:532.51px;font-size:8.4px;line-height:8.4px;color:#2a2a2a;transform:scaleX(1.129);transform-origin:left"><b>95,41</b><span style="margin-left:1.4px">%</span></div>
<div class="a " style="left:728.00px;top:533.56px;font-size:6.3px;line-height:6.3px;color:#555;">349.507</div>
<div class="a " style="left:855.50px;top:525.24px;font-size:5.2px;line-height:5.2px;color:#333;transform:scaleX(1.13);transform-origin:left">En blanco</div>
<div class="a " style="left:855.50px;top:532.51px;font-size:8.4px;line-height:8.4px;color:#2a2a2a;transform:scaleX(1.170);transform-origin:left"><b>4,58</b><span style="margin-left:1.4px">%</span></div>
<div class="a " style="left:893.00px;top:533.56px;font-size:6.3px;line-height:6.3px;color:#555;">16.814</div>
<div class="a" style="left:161.5px;top:524px;width:1px;height:21px;background:#9aa0a8"></div>
<div class="a" style="left:503px;top:524px;width:1px;height:21px;background:#9aa0a8"></div>

<!-- ===== TASKBAR ===== -->
<div class="a" style="left:2px;top:550.5px;width:1020px;height:25px;background:#1c1c1c"></div>
<!-- weather -->
<svg class="a" style="left:10px;top:555px" width="15" height="16" viewBox="0 0 15 16"><path d="M1.5 9.2C2 5.6 5 3.8 8 4.2c2.6.4 4.4 2.4 4.6 4.6z" fill="#7fc0ee"/><path d="M7 8.8l-1 4.6a1 1 0 0 1-1.8-.4" stroke="#9aa8b4" stroke-width=".9" fill="none"/><path d="M10.5 1.2l-.5 1.6M12.6 1.8l-.5 1.6M8.6 1.6l-.4 1.2" stroke="#7ab6e0" stroke-width=".8"/></svg>
<div class="a " style="left:28.00px;top:555.74px;font-size:6.56px;line-height:6.56px;color:#f2f2f2;">2 mm de lluvia</div>
<div class="a " style="left:28.00px;top:564.74px;font-size:6.6px;line-height:6.6px;color:#cfcfcf;">Martes</div>
<!-- start -->
<svg class="a" style="left:282px;top:557px" width="13" height="13" viewBox="0 0 13 13"><rect x="0" y="0" width="6.1" height="6.1" fill="#3fb8f5"/><rect x="6.9" y="0" width="6.1" height="6.1" fill="#58c7fb"/><rect x="0" y="6.9" width="6.1" height="6.1" fill="#2aa4ec"/><rect x="6.9" y="6.9" width="6.1" height="6.1" fill="#43b6f6"/></svg>
<!-- search -->
<div class="a" style="left:302px;top:554px;width:117px;height:18px;border-radius:9px;background:#3a3a3a"></div>
<svg class="a" style="left:307px;top:559px" width="9" height="9" viewBox="0 0 9 9"><circle cx="3.8" cy="3.8" r="2.9" stroke="#e6e6e6" stroke-width="1.1" fill="none"/><path d="M5.9 5.9L8.4 8.4" stroke="#e6e6e6" stroke-width="1.2"/></svg>
<div class="a " style="left:322.00px;top:560.08px;font-size:7.4px;line-height:7.4px;color:#dcdcdc;">Buscar</div>
<div class="a" style="left:390px;top:556px;width:28px;height:14px;border-radius:7px;background:linear-gradient(180deg,#e9a7a5 0%,#d98d8f 35%,#4a5a8a 55%,#8aa0a8 75%,#5a6a70 100%)"></div>
<!-- app icons -->
<svg class="a" style="left:425px;top:556px" width="14" height="13" viewBox="0 0 14 13"><rect x="3" y="0" width="11" height="13" rx="1" fill="#2b7cd3"/><rect x="3" y="3" width="11" height="3" fill="#41a5ee"/><rect x="0" y="3" width="8" height="8" rx="1" fill="#185abd"/><path d="M1.3 4.7l1 4.6 1.7-3.3 1.7 3.3 1-4.6" stroke="#fff" stroke-width=".9" fill="none"/></svg>
<div class="a" style="left:429px;top:572.5px;width:5px;height:1.5px;border-radius:1px;background:#aaa"></div>
<svg class="a" style="left:448px;top:556px" width="14" height="14" viewBox="0 0 14 14"><circle cx="7" cy="7" r="6.6" fill="#e8543a"/><path d="M7 .4A6.6 6.6 0 0 1 13.6 7H7z" fill="#ff8f6b"/><rect x="0" y="3" width="7" height="8" rx="1" fill="#c43e1c"/><path d="M2.3 9.6V4.6h1.6a1.3 1.3 0 0 1 0 2.6H2.3" stroke="#fff" stroke-width=".9" fill="none"/></svg>
<svg class="a" style="left:472px;top:556px" width="14" height="14" viewBox="0 0 14 14"><circle cx="7" cy="7" r="6.5" fill="#1a9bd8"/><path d="M.6 8.6C1.2 4 4.8 1.6 8.4 2c3 .4 4.8 2.4 5 4.6-.6-1.6-2.2-2.6-4.4-2.4-2.6.2-3.8 2-3.8 3.6 0 2.6 2.8 5.4 6.6 4.8A6.6 6.6 0 0 1 .6 8.6z" fill="#37c85f"/><circle cx="8" cy="8" r="2.6" fill="#0c4f8a"/></svg>
<svg class="a" style="left:495px;top:555px" width="14" height="15" viewBox="0 0 14 15"><circle cx="10.5" cy="3.5" r="2" fill="#7b83eb"/><rect x="7.5" y="6.5" width="6" height="7" rx="3" fill="#7b83eb"/><circle cx="5.5" cy="3" r="2.4" fill="#5059c9"/><rect x="1.5" y="6" width="8" height="8.5" rx="2" fill="#5059c9"/><rect x="0" y="5.5" width="6.5" height="6.5" rx="1" fill="#4b53bc"/><path d="M1.4 7.2h3.8M3.3 7.2v3.6" stroke="#fff" stroke-width=".9"/></svg>
<svg class="a" style="left:518.5px;top:556px" width="14" height="14" viewBox="0 0 14 14"><circle cx="7" cy="7" r="6.8" fill="#1877f2"/><path d="M7.8 14V9h1.7l.3-2H7.8V5.8c0-.6.3-1 1.1-1h1V3c-.3 0-.9-.1-1.5-.1-1.6 0-2.5.9-2.5 2.5V7H4.2v2h1.7v5z" fill="#fff"/></svg>
<svg class="a" style="left:542px;top:556px" width="14" height="14" viewBox="0 0 14 14"><rect x="3" y="0.5" width="11" height="13" rx="1" fill="#21a366"/><rect x="3" y="4.8" width="11" height="4.3" fill="#107c41"/><rect x="0" y="3" width="8" height="8" rx="1" fill="#107c41"/><path d="M2 4.8l3.6 4.4M5.6 4.8L2 9.2" stroke="#fff" stroke-width="1"/></svg>
<svg class="a" style="left:565px;top:557px" width="14" height="11" viewBox="0 0 14 11"><rect x="0" y="0.5" width="14" height="10" rx="2.5" fill="#f00"/><path d="M5.6 3.2v4.6l3.8-2.3z" fill="#fff"/></svg>
<svg class="a" style="left:588.5px;top:556px" width="14" height="14" viewBox="0 0 14 14"><defs><linearGradient id="ig" x1="0" y1="1" x2="1" y2="0"><stop offset="0" stop-color="#f9b043"/><stop offset=".5" stop-color="#e1306c"/><stop offset="1" stop-color="#833ab4"/></linearGradient></defs><rect x="0" y="0" width="14" height="14" rx="3.5" fill="url(#ig)"/><rect x="3" y="3" width="8" height="8" rx="2.4" stroke="#fff" stroke-width="1" fill="none"/><circle cx="7" cy="7" r="1.8" stroke="#fff" stroke-width="1" fill="none"/></svg>
<svg class="a" style="left:611.5px;top:557px" width="15" height="12" viewBox="0 0 15 12"><path d="M0 1.2C0 .5.5 0 1.2 0h4l1.5 1.5h7c.7 0 1.2.5 1.2 1.2V11H0z" fill="#e8b730"/><rect x="0" y="3.5" width="15" height="8.5" rx=".8" fill="#ffd45a"/><rect x="3" y="8.5" width="9" height="3.5" fill="#1f7fd6"/></svg>
<svg class="a" style="left:635px;top:556px" width="14" height="14" viewBox="0 0 14 14"><circle cx="7" cy="7" r="6.8" fill="#db4437"/><path d="M7 .2A6.8 6.8 0 0 1 12.9 3.6L7 3.6z" fill="#db4437"/><path d="M12.9 3.5A6.8 6.8 0 0 1 7 13.8L9.6 9.3z" fill="#ffcd40"/><path d="M7 13.8A6.8 6.8 0 0 1 1.1 3.6L4.4 8.5z" fill="#0f9d58"/><circle cx="7" cy="7" r="3" fill="#fff"/><circle cx="7" cy="7" r="2.4" fill="#4285f4"/></svg>
<svg class="a" style="left:658.5px;top:556px" width="14" height="14" viewBox="0 0 14 14"><circle cx="7" cy="7" r="6.8" fill="#f28c28"/><circle cx="7" cy="7" r="5" fill="#8a4dd8"/><circle cx="7" cy="7.3" r="3.4" fill="#ffe28a"/><path d="M6.2 6h1.4v3.2" stroke="#5a3a8a" stroke-width="1.1" fill="none"/></svg>
<svg class="a" style="left:682px;top:556px" width="16" height="14" viewBox="0 0 16 14"><rect x="0" y="3" width="11" height="10" rx="1" fill="#1a8fe3"/><rect x="3" y="5" width="10" height="8" fill="#0f6cbd"/><circle cx="11.8" cy="3.6" r="3.6" fill="#e35a3a"/><text x="11.8" y="5.4" font-size="4.6" font-family="Liberation Sans" font-weight="bold" fill="#fff" text-anchor="middle">23</text></svg>
<svg class="a" style="left:705px;top:555.5px" width="15" height="15" viewBox="0 0 15 15"><circle cx="7.5" cy="7.5" r="6.6" stroke="#b8a8b8" stroke-width="1.1" fill="#2a2a2a"/><path d="M6 4.5v6l4.6-3z" fill="#f2f2f2"/></svg>
<div class="a" style="left:710px;top:572.5px;width:5px;height:1.5px;border-radius:1px;background:#aaa"></div>
<div class="a" style="left:725px;top:552px;width:22px;height:21px;border-radius:3px;background:#2e2e2e"></div>
<svg class="a" style="left:729px;top:556px" width="14" height="14" viewBox="0 0 14 14"><circle cx="7" cy="7" r="6.8" fill="#db4437"/><path d="M12.9 3.5A6.8 6.8 0 0 1 7 13.8L9.6 9.3z" fill="#ffcd40"/><path d="M7 13.8A6.8 6.8 0 0 1 1.1 3.6L4.4 8.5z" fill="#0f9d58"/><circle cx="7" cy="7" r="3" fill="#fff"/><circle cx="7" cy="7" r="2.4" fill="#4285f4"/></svg>
<div class="a" style="left:738px;top:553px;width:9px;height:8px;border-radius:50%;background:#f4f4f4;border:1px solid #333"></div>
<div class="a" style="left:731px;top:572px;width:9px;height:2px;border-radius:1px;background:#e08a5a"></div>
<!-- tray -->
<svg class="a" style="left:894px;top:561px" width="8" height="5" viewBox="0 0 8 5"><path d="M1 4L4 1l3 3" stroke="#e6e6e6" stroke-width="1.1" fill="none"/></svg>
<svg class="a" style="left:909px;top:559px" width="12" height="8" viewBox="0 0 12 8"><path d="M3 7.5a2.6 2.6 0 0 1-.3-5.2A3.6 3.6 0 0 1 9.4 2.4 2.6 2.6 0 0 1 9.2 7.5z" fill="#dcdcdc"/></svg>
<svg class="a" style="left:926px;top:558px" width="11" height="11" viewBox="0 0 11 11"><rect x=".6" y=".6" width="8" height="6.6" rx=".6" stroke="#e6e6e6" stroke-width="1" fill="none"/><path d="M4.6 7.2v2.2M2.6 9.8h4" stroke="#e6e6e6" stroke-width="1"/><circle cx="9" cy="2" r="1.5" fill="#e6e6e6"/></svg>
<svg class="a" style="left:939px;top:559px" width="10" height="9" viewBox="0 0 10 9"><path d="M.8 3h1.8L5.4.8v7.4L2.6 6H.8z" stroke="#e6e6e6" stroke-width=".9" fill="none"/><path d="M7 2.6c.7.8.7 3 0 3.8M8.4 1.4c1.2 1.4 1.2 4.8 0 6.2" stroke="#e6e6e6" stroke-width=".8" fill="none"/></svg>
<svg class="a" style="left:952px;top:558px" width="11" height="10" viewBox="0 0 11 10"><path d="M1 1h6.4v4.6H4L2 7.4V5.6H1z" stroke="#e6e6e6" stroke-width=".9" fill="none"/><path d="M8.6 3.4H10v4.6H9v1.6L7.2 8H5" stroke="#e6e6e6" stroke-width=".9" fill="none"/></svg>
<div class="a " style="left:972.00px;top:556.55px;font-size:6.4px;line-height:6.4px;color:#f0f0f0;">8:41 p. m.</div>
<div class="a " style="left:970.30px;top:564.52px;font-size:6.85px;line-height:6.85px;color:#f0f0f0;">8/03/2026</div>
<svg class="a" style="left:1003px;top:557px" width="10" height="11" viewBox="0 0 10 11"><path d="M5 1.2c-1.8 0-3 1.3-3 3v2.4L.9 8.4h8.2L8 6.6V4.2c0-1.7-1.2-3-3-3z" fill="#f2f2f2"/><path d="M3.8 9.2a1.3 1.3 0 0 0 2.4 0" stroke="#f2f2f2" stroke-width=".9" fill="none"/><circle cx="7.6" cy="2.4" r="1.6" fill="#1c1c1c" stroke="#f2f2f2" stroke-width=".6"/></svg>

<div class="a" style="left:1022px;top:50px;width:2px;height:465px;background:#7e2a4c"></div>
<div class="a" style="left:2px;top:2px;width:1.5px;height:48px;background:#382a44"></div>
</div></body></html>
